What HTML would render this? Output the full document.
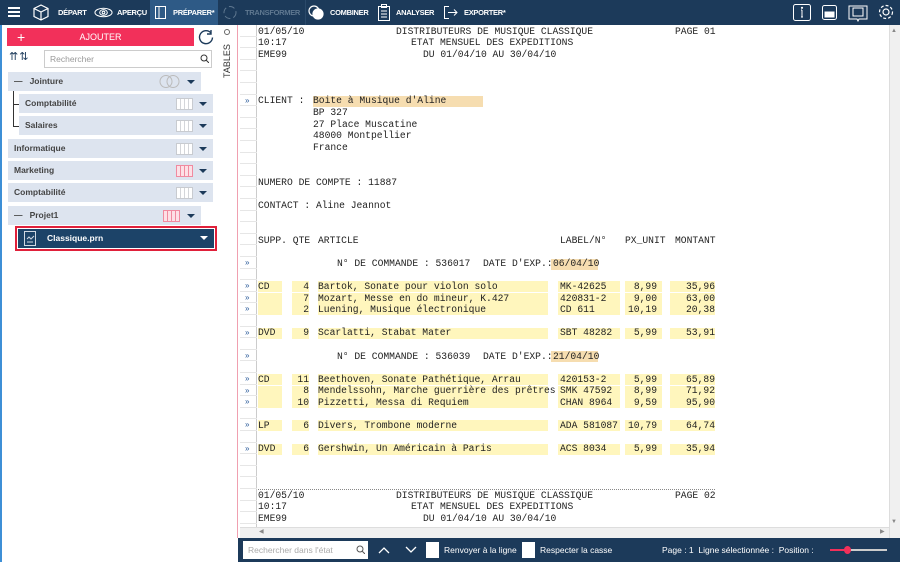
<!DOCTYPE html>
<html><head><meta charset="utf-8"><style>
*{margin:0;padding:0;box-sizing:border-box}
body{width:900px;height:562px;overflow:hidden;background:#fff;font-family:"Liberation Sans",sans-serif;position:relative}
.a{position:absolute}
#top{left:0;top:0;width:900px;height:25px;background:#1c3a5a}
.tab{position:absolute;top:0;height:25px;color:#fff;font-size:7.5px;font-weight:bold;line-height:25px;letter-spacing:-0.3px}
.side{left:0;top:25px;width:239px;height:513px;background:#fff;border-left:2px solid #3d8fd6}
.it{position:absolute;height:19px;background:#dde4ef;font-size:8.5px;color:#444;line-height:19px;padding-left:6px;font-weight:bold}
.it .tri{position:absolute;right:6px;top:8px;width:0;height:0;border-left:4px solid transparent;border-right:4px solid transparent;border-top:4px solid #1c3a5a}
.grid{position:absolute;top:4px;width:17px;height:12px;border:1px solid #c8cbd0;background:repeating-linear-gradient(90deg,#fff 0 3px,#d4d6da 3px 4px),#fff}
.gridp{border-color:#f08aa0;background:repeating-linear-gradient(90deg,#fde0e6 0 3px,#f08aa0 3px 4px)}
.m{position:absolute;font-family:"Liberation Mono",monospace;font-size:9.67px;color:#222;white-space:pre;line-height:12px}
.hy{position:absolute;background:#fff6bd;height:11px}
.ho{position:absolute;background:#f6ddb0;height:11px}
.g{position:absolute;left:240px;width:17px;height:11.6px;border-bottom:1px solid #e6e6e6}
.mk{position:absolute;left:245px;font-size:8px;color:#2a5a9a}
</style></head><body>
<div class="a" id="top"></div>
<div class="a" style="left:8px;top:7px;width:12px;height:2px;background:#fff;box-shadow:0 4px 0 #fff,0 8px 0 #fff"></div>
<svg class="a" style="left:33px;top:4px" width="16" height="17" viewBox="0 0 16 17" fill="none" stroke="#fff" stroke-width="1.2"><path d="M8 1L15 4.5V12.5L8 16L1 12.5V4.5Z M1 4.5L8 8L15 4.5 M8 8V16"/></svg>
<div class="tab" style="left:58px">DÉPART</div>
<svg class="a" style="left:94px;top:7px" width="19" height="11" viewBox="0 0 20 11" fill="none" stroke="#fff" stroke-width="1.1"><ellipse cx="10" cy="5.5" rx="9" ry="4.5"/><ellipse cx="10" cy="5.5" rx="4" ry="3"/><circle cx="10" cy="5.5" r="1.4"/></svg>
<div class="tab" style="left:117px">APERÇU</div>
<div class="a" style="left:150px;top:0;width:68px;height:25px;background:#2e5a86"></div>
<svg class="a" style="left:155px;top:6px" width="11" height="13" fill="none" stroke="#fff"><rect x="0.5" y="0.5" width="10" height="12"/><path d="M4 1V12"/></svg>
<div class="tab" style="left:173px">PRÉPARER*</div>
<svg class="a" style="left:222px;top:5px" width="16" height="15" fill="none" stroke="#5f7890"><circle cx="8" cy="7.5" r="6" stroke-dasharray="6 3"/></svg>
<div class="tab" style="left:245px;color:#5f7890">TRANSFORMER</div>
<div class="a" style="left:305px;top:0;width:1px;height:25px;background:#2b4a6a"></div>
<svg class="a" style="left:308px;top:5px" width="16" height="15" fill="none" stroke="#fff" stroke-width="1.2"><circle cx="6" cy="6" r="5"/><circle cx="10" cy="9" r="5" fill="#fff"/></svg>
<div class="tab" style="left:330px">COMBINER</div>
<svg class="a" style="left:378px;top:4px" width="12" height="17" fill="none" stroke="#fff"><rect x="0.5" y="2.5" width="11" height="14"/><rect x="3.5" y="0.5" width="5" height="3"/><path d="M3 7h6M3 10h6M3 13h6"/></svg>
<div class="tab" style="left:396px">ANALYSER</div>
<svg class="a" style="left:444px;top:6px" width="14" height="13" fill="none" stroke="#fff"><path d="M5 .5H.5v12H5M4 6.5h9M10 3.5l3 3-3 3"/></svg>
<div class="tab" style="left:464px">EXPORTER*</div>
<svg class="a" style="left:793px;top:4px" width="18" height="17" fill="none" stroke="#fff"><rect x="0.5" y="0.5" width="17" height="16" rx="2"/><path d="M9 6v7M8 6h1M8 13h2"/><circle cx="9" cy="3.8" r=".6" fill="#fff"/></svg>
<svg class="a" style="left:822px;top:5px" width="15" height="15" fill="none" stroke="#fff"><rect x="0.5" y="0.5" width="14" height="14" rx="2"/><path d="M3 7h9v5H3z" fill="#fff"/></svg>
<svg class="a" style="left:848px;top:3px" width="20" height="19" fill="none" stroke="#fff"><path d="M1 3h18v13H11l-1 2-1-2H1z"/><rect x="5" y="5" width="10" height="8"/></svg>
<svg class="a" style="left:877px;top:3px" width="18" height="18" fill="none" stroke="#fff" stroke-width="1.2"><circle cx="9" cy="9" r="3"/><circle cx="9" cy="9" r="6.5" stroke-dasharray="3 2"/></svg>

<div class="a side"></div>
<div class="a" style="left:7px;top:28px;width:187px;height:18px;background:#f2305a;color:#fff;font-size:9px;line-height:18px;text-align:center">AJOUTER</div>
<div class="a" style="left:17px;top:28px;color:#fff;font-size:14px;line-height:18px;font-weight:300">+</div>
<svg class="a" style="left:198px;top:29px" width="16" height="16" fill="none" stroke="#1c3a5a" stroke-width="1.4"><path d="M13 4A6.5 6.5 0 1 0 14.5 8.5"/><path d="M13 1v4h-4"/></svg>
<div class="a" style="left:219px;top:25px;width:19px;height:513px;border-right:1px solid #f0a0b0"></div>
<div class="a" style="left:224px;top:29px;width:6px;height:6px;border:1px solid #666;border-radius:50%"></div>
<div class="a" style="left:222px;top:78px;font-size:9px;color:#333;transform:rotate(-90deg);transform-origin:left top;white-space:nowrap">TABLES</div>
<div class="a" style="left:9px;top:50px;font-size:11px;color:#1c3a5a;letter-spacing:1px">⇈⇅</div>
<div class="a" style="left:44px;top:50px;width:168px;height:18px;border:1px solid #ccc;font-size:8.5px;color:#999;line-height:16px;padding-left:5px">Rechercher</div>
<svg class="a" style="left:200px;top:54px" width="9" height="9" fill="none" stroke="#333"><circle cx="4" cy="4" r="3"/><path d="M6 6l3 3"/></svg>

<div class="it" style="left:8px;top:72px;width:193px">—&nbsp;&nbsp;&nbsp;Jointure<svg style="position:absolute;left:150px;top:3px" width="24" height="13" fill="none" stroke="#bbb"><circle cx="8" cy="6.5" r="6"/><circle cx="15" cy="6.5" r="6"/></svg><span class="tri"></span></div>
<div class="a" style="left:13px;top:91px;width:1px;height:36px;background:#333"></div>
<div class="a" style="left:13px;top:104px;width:6px;height:1px;background:#333"></div>
<div class="a" style="left:13px;top:126px;width:6px;height:1px;background:#333"></div>
<div class="it" style="left:19px;top:94px;width:194px">Comptabilité<span class="grid" style="left:157px"></span><span class="tri"></span></div>
<div class="it" style="left:19px;top:116px;width:194px">Salaires<span class="grid" style="left:157px"></span><span class="tri"></span></div>
<div class="it" style="left:8px;top:139px;width:205px">Informatique<span class="grid" style="left:168px"></span><span class="tri"></span></div>
<div class="it" style="left:8px;top:161px;width:205px">Marketing<span class="grid gridp" style="left:168px"></span><span class="tri"></span></div>
<div class="it" style="left:8px;top:183px;width:205px">Comptabilité<span class="grid" style="left:168px"></span><span class="tri"></span></div>
<div class="it" style="left:8px;top:206px;width:193px">—&nbsp;&nbsp;&nbsp;Projet1<span class="grid gridp" style="left:155px"></span><span class="tri"></span></div>
<div class="a" style="left:15px;top:226px;width:202px;height:25px;border:2px solid #e0203a"></div>
<div class="a" style="left:18px;top:229px;width:196px;height:19px;background:#1c4368;color:#fff;font-size:8.5px;font-weight:bold;line-height:19px;padding-left:29px">Classique.prn</div>
<svg class="a" style="left:24px;top:231px" width="12" height="15" fill="none" stroke="#cfd8e2"><rect x=".5" y=".5" width="11" height="14"/><path d="M3 8l2-2 2 2 3-3M3 11h6"/></svg>
<div class="a" style="left:200px;top:236px;border-left:4px solid transparent;border-right:4px solid transparent;border-top:4px solid #fff"></div>

<div class="a" style="left:256px;top:25px;width:1px;height:502px;background:#ccc"></div>
<div id="gut"></div>

<div class="ho" style="left:313px;top:96px;width:170px"></div>
<div class="ho" style="left:551px;top:259px;width:47px"></div>
<div class="ho" style="left:551px;top:351px;width:47px"></div>

<div class="a" style="left:258px;top:489px;width:457px;border-top:1px dotted #888"></div>
<div id="txt"></div>

<div class="a" style="left:889px;top:25px;width:11px;height:513px;background:#f0f0f0;border-left:1px solid #ddd"></div>
<div class="a" style="left:891px;top:28px;font-size:6px;color:#888">▲</div>
<div class="a" style="left:891px;top:519px;font-size:6px;color:#888">▼</div>
<div class="a" style="left:240px;top:527px;width:649px;height:11px;background:#f0f0f0;border-top:1px solid #ddd"></div>
<div class="a" style="left:259px;top:528px;font-size:6px;color:#888">◀</div>
<div class="a" style="left:880px;top:528px;font-size:6px;color:#888">▶</div>

<div class="a" style="left:238px;top:538px;width:662px;height:24px;background:#1c3a5a"></div>
<div class="a" style="left:0;top:538px;width:238px;height:24px;background:#fff;border-left:2px solid #3d8fd6"></div>
<div class="a" style="left:243px;top:541px;width:125px;height:18px;background:#fff;font-size:8.5px;color:#aaa;line-height:18px;padding-left:5px">Rechercher dans l'état</div>
<svg class="a" style="left:356px;top:545px" width="9" height="9" fill="none" stroke="#555"><circle cx="4" cy="4" r="3"/><path d="M6 6l3 3"/></svg>
<svg class="a" style="left:378px;top:545px" width="40" height="10" fill="none" stroke="#fff" stroke-width="1.3"><path d="M1 8l5-5 5 5M28 2l5 5 5-5"/></svg>
<div class="a" style="left:426px;top:542px;width:13px;height:16px;background:#fff"></div>
<div class="a" style="left:444px;top:545px;color:#fff;font-size:8.5px">Renvoyer à la ligne</div>
<div class="a" style="left:522px;top:542px;width:13px;height:16px;background:#fff"></div>
<div class="a" style="left:540px;top:545px;color:#fff;font-size:8.5px">Respecter la casse</div>
<div class="a" style="left:662px;top:545px;color:#fff;font-size:8.5px;white-space:pre">Page : 1  Ligne sélectionnée :  Position :</div>
<div class="a" style="left:830px;top:549px;width:57px;height:2px;background:#ccc"></div>
<div class="a" style="left:830px;top:549px;width:17px;height:2px;background:#f2305a"></div>
<div class="a" style="left:844px;top:546px;width:7px;height:8px;border-radius:50%;background:#f2305a"></div>

<script>
var R=function(n){return 25+11.6*n};
var g='';for(var n=0;n<44;n++){g+='<div class="g" style="top:'+R(n)+'px"></div>';}
[6,20,22,23,24,26,28,30,31,32,34,36].forEach(function(n){g+='<div class="mk" style="top:'+(R(n)+1)+'px">»</div>';});
document.getElementById('gut').innerHTML=g;
var t=[],h='';
function T(n,x,s,ra){t.push('<div class="m" style="'+(ra?'right:'+(900-x):'left:'+x)+'px;top:'+(R(n)+0.8)+'px">'+s+'</div>');}
function H(n,x,w){h+='<div class="hy" style="left:'+x+'px;top:'+(R(n)+1)+'px;width:'+w+'px"></div>';}
function head(o,p){T(o,258,'01/05/10');T(o,396,'DISTRIBUTEURS DE MUSIQUE CLASSIQUE');T(o,675,'PAGE 0'+p);T(o+1,258,'10:17');T(o+1,411,'ETAT MENSUEL DES EXPEDITIONS');T(o+2,258,'EME99');T(o+2,423,'DU 01/04/10 AU 30/04/10');}
head(0,1);head(40,2);
T(6,258,'CLIENT :');T(6,313,"Boite à Musique d'Aline");T(7,313,'BP 327');T(8,313,'27 Place Muscatine');T(9,313,'48000 Montpellier');T(10,313,'France');
T(13,258,'NUMERO DE COMPTE : 11887');T(15,258,'CONTACT : Aline Jeannot');
T(18,258,'SUPP. QTE');T(18,318,'ARTICLE');T(18,560,'LABEL/N°');T(18,625,'PX_UNIT');T(18,675,'MONTANT');
T(20,337,"N° DE COMMANDE : 536017");T(20,483,"DATE D'EXP.:");T(20,553,"06/04/10");
T(28,337,"N° DE COMMANDE : 536039");T(28,483,"DATE D'EXP.:");T(28,553,"21/04/10");
var rows=[[22,'CD','4','Bartok, Sonate pour violon solo','MK-42625','8,99','35,96'],
[23,'','7','Mozart, Messe en do mineur, K.427','420831-2','9,00','63,00'],
[24,'','2','Luening, Musique électronique','CD 611','10,19','20,38'],
[26,'DVD','9','Scarlatti, Stabat Mater','SBT 48282','5,99','53,91'],
[30,'CD','11','Beethoven, Sonate Pathétique, Arrau','420153-2','5,99','65,89'],
[31,'','8','Mendelssohn, Marche guerrière des prêtres','SMK 47592','8,99','71,92'],
[32,'','10','Pizzetti, Messa di Requiem','CHAN 8964','9,59','95,90'],
[34,'LP','6','Divers, Trombone moderne','ADA 581087','10,79','64,74'],
[36,'DVD','6','Gershwin, Un Américain à Paris','ACS 8034','5,99','35,94']];
var groups=[[22,3],[26,1],[30,3],[34,1],[36,1]];
groups.forEach(function(gq){var n=gq[0],k=gq[1];for(var i=0;i<k;i++){H(n+i,258,24);H(n+i,292,17);H(n+i,318,230);H(n+i,558,62);H(n+i,625,37);H(n+i,670,45);}});
rows.forEach(function(r){var n=r[0];if(r[1])T(n,258,r[1]);T(n,309,r[2],1);T(n,318,r[3]);T(n,560,r[4]);T(n,657,r[5],1);T(n,715,r[6],1);});
document.getElementById('txt').innerHTML=h+t.join('');
</script>
</body></html>
